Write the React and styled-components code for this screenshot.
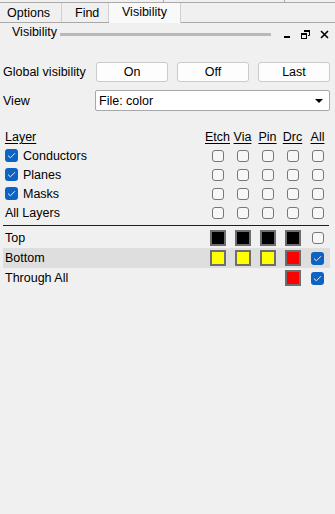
import React from "react";
import styled, { createGlobalStyle } from "styled-components";

const GlobalStyle = createGlobalStyle`
  html, body {
    margin: 0;
    padding: 0;
    background: #f0f0f0;
  }
  body {
    font-family: "Liberation Sans", Arial, sans-serif;
    font-size: 12.5px;
    color: #000;
  }
`;

const Panel = styled.div`
  width: 335px;
  height: 514px;
  background: #f0f0f0;
  overflow: hidden;
`;

const TopStrip = styled.div`
  display: flex;
  height: 2px;
  border-bottom: 1px solid #a9a9a9;
`;

const StripCell = styled.div`
  width: ${(props) => props.width || "auto"};
  flex: ${(props) => (props.width ? "none" : "1")};
  border-right: ${(props) => (props.width ? "1px solid #a9a9a9" : "none")};
`;

const TabBar = styled.div`
  display: flex;
  height: 19px;
  border-bottom: 1px solid #a9a9a9;
`;

const Tab = styled.div`
  box-sizing: border-box;
  width: ${(props) => props.width}px;
  height: ${(props) => (props.active ? "20px" : "19px")};
  padding-left: ${(props) => props.pad}px;
  line-height: ${(props) => (props.active ? "18px" : "20px")};
  background: ${(props) => (props.active ? "#f9f9f9" : "#f0f0f0")};
  border-right: 1px solid #d0d0d0;
  white-space: nowrap;
`;

const TitleBar = styled.div`
  display: flex;
  align-items: center;
  height: 21px;
  padding: 0 6px 0 12px;
`;

const TitleText = styled.span`
  line-height: 14px;
  margin-top: -3px;
`;

const Grip = styled.div`
  flex: 1;
  height: 3px;
  background: #b9b9b9;
  margin: 2px 12px 0 3px;
`;

const TitleIcons = styled.div`
  display: flex;
  align-items: center;
  gap: 10px;
  margin-top: 2px;
`;

const Content = styled.div`
  padding: 18px 5px 0 3px;
`;

const FormRow = styled.div`
  display: grid;
  grid-template-columns: 84px 1fr 1fr 1fr;
  column-gap: 9px;
  align-items: center;
  height: 20px;
  margin-bottom: ${(props) => props.gap || 0}px;
`;

const Label = styled.span`
  white-space: nowrap;
`;

const Button = styled.button`
  height: 20px;
  padding: 0;
  border: 1px solid #cacaca;
  border-radius: 3px;
  background: #fdfdfd;
  font: inherit;
  color: #000;
`;

const Select = styled.div`
  grid-column: 2 / 5;
  display: flex;
  align-items: center;
  justify-content: space-between;
  box-sizing: border-box;
  height: 21px;
  margin-left: -1px;
  padding: 0 6px 0 3px;
  border: 1px solid #a8a8a8;
  border-radius: 2px;
  background: #fff;
`;

const Caret = styled.span`
  width: 0;
  height: 0;
  border-left: 4px solid transparent;
  border-right: 4px solid transparent;
  border-top: 4px solid #000;
`;

const Grid = styled.div`
  display: grid;
  grid-template-columns: 1fr repeat(5, 25px);
  margin-top: ${(props) => props.top || 0}px;
`;

const Cell = styled.div`
  display: flex;
  align-items: center;
  justify-content: ${(props) => (props.left ? "flex-start" : "center")};
  height: ${(props) => props.h || 19}px;
  padding-left: ${(props) => (props.left ? 2 : 0)}px;
  background: ${(props) => (props.hl ? "#dedede" : "transparent")};
  white-space: nowrap;
`;

const HeadText = styled.span`
  text-decoration: underline;
  text-underline-offset: 2px;
`;

const Separator = styled.div`
  height: 1px;
  background: #1e1e1e;
  margin: 3px 1px 2px 0;
`;

const EmptyBox = styled.span`
  box-sizing: border-box;
  width: 12px;
  height: 12px;
  border: 1px solid #777;
  border-radius: 3px;
  background: #f7f7f7;
`;

const BlueBox = styled.span`
  display: flex;
  align-items: center;
  justify-content: center;
  width: 13px;
  height: 13px;
  border-radius: 3px;
  background: #0e62c2;
  margin-right: ${(props) => (props.withText ? 5 : 0)}px;
`;

const Swatch = styled.span`
  box-sizing: border-box;
  width: 16px;
  height: 16px;
  border: 2px solid #6e6e6e;
  background: ${(props) => props.color};
`;

const Tick = () => (
  <svg width="9" height="7" viewBox="0 0 9 7">
    <path d="M1 3.6 L3.4 5.8 L8 1.2" fill="none" stroke="#e8f0fb" strokeWidth="1" />
  </svg>
);

const Checked = ({ withText }) => (
  <BlueBox withText={withText}>
    <Tick />
  </BlueBox>
);

const MinIcon = () => (
  <svg width="8" height="9" viewBox="0 0 8 9">
    <rect x="1" y="6" width="6" height="2" fill="#000" />
  </svg>
);

const RestoreIcon = () => (
  <svg width="9" height="9" viewBox="0 0 9 9">
    <path d="M3 0.5 H8.5 V5.5 H7" fill="none" stroke="#000" strokeWidth="1" />
    <rect x="3" y="0" width="6" height="2" fill="#000" />
    <rect x="0.5" y="3.5" width="5" height="5" fill="none" stroke="#000" strokeWidth="1" />
    <rect x="0" y="3" width="6" height="2" fill="#000" />
  </svg>
);

const CloseIcon = () => (
  <svg width="9" height="9" viewBox="0 0 9 9">
    <path d="M1 1 L8 8 M8 1 L1 8" stroke="#000" strokeWidth="1.6" />
  </svg>
);

const layers = ["Conductors", "Planes", "Masks"];
const cols = ["Etch", "Via", "Pin", "Drc", "All"];

const subclasses = [
  { name: "Top", colors: ["#000", "#000", "#000", "#000"], all: false },
  { name: "Bottom", colors: ["#ffff00", "#ffff00", "#ffff00", "#ff0000"], all: true, hl: true },
  { name: "Through All", colors: [null, null, null, "#ff0000"], all: true },
];

const App = () => {
  return (
    <Panel>
      <GlobalStyle />
      <TopStrip>
        <StripCell width="163px" />
        <StripCell width="120px" />
        <StripCell />
      </TopStrip>
      <TabBar>
        <Tab width={62} pad={7}>Options</Tab>
        <Tab width={47} pad={13}>Find</Tab>
        <Tab width={72} pad={13} active>Visibility</Tab>
      </TabBar>
      <TitleBar>
        <TitleText>Visibility</TitleText>
        <Grip />
        <TitleIcons>
          <MinIcon />
          <RestoreIcon />
          <CloseIcon />
        </TitleIcons>
      </TitleBar>
      <Content>
        <FormRow gap={8}>
          <Label>Global visibility</Label>
          <Button>On</Button>
          <Button>Off</Button>
          <Button>Last</Button>
        </FormRow>
        <FormRow>
          <Label>View</Label>
          <Select>
            <span>File: color</span>
            <Caret />
          </Select>
        </FormRow>

        <Grid top={18}>
          <Cell left h={18}>
            <HeadText>Layer</HeadText>
          </Cell>
          {cols.map((c) => (
            <Cell key={c} h={18}>
              <HeadText>{c}</HeadText>
            </Cell>
          ))}
          {layers.map((name) => (
            <React.Fragment key={name}>
              <Cell left>
                <Checked withText />
                {name}
              </Cell>
              {cols.map((c) => (
                <Cell key={c}>
                  <EmptyBox />
                </Cell>
              ))}
            </React.Fragment>
          ))}
          <Cell left>All Layers</Cell>
          {cols.map((c) => (
            <Cell key={c}>
              <EmptyBox />
            </Cell>
          ))}
        </Grid>

        <Separator />

        <Grid>
          {subclasses.map((row) => (
            <React.Fragment key={row.name}>
              <Cell left h={20} hl={row.hl}>
                {row.name}
              </Cell>
              {row.colors.map((color, i) => (
                <Cell key={i} h={20} hl={row.hl}>
                  {color && <Swatch color={color} />}
                </Cell>
              ))}
              <Cell h={20} hl={row.hl}>
                {row.all ? <Checked /> : <EmptyBox />}
              </Cell>
            </React.Fragment>
          ))}
        </Grid>
      </Content>
    </Panel>
  );
};

export default App;
